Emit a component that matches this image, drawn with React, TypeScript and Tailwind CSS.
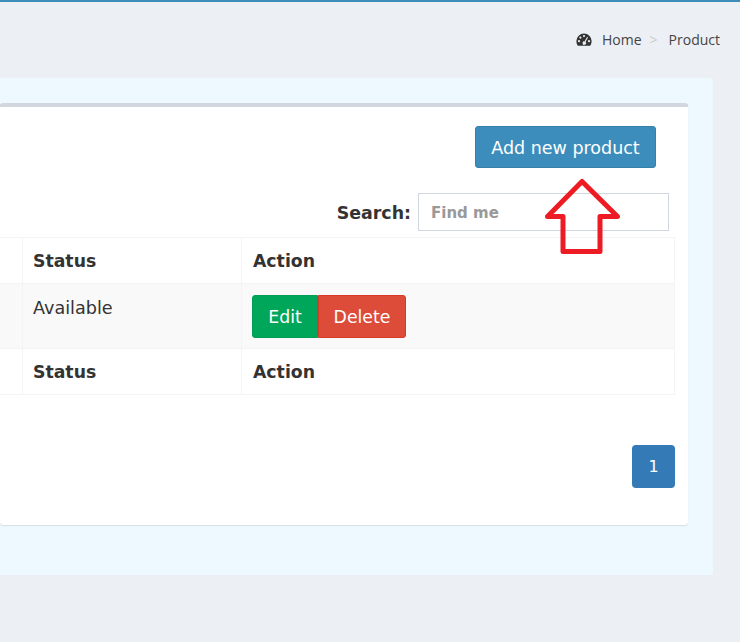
const App = () => {
  return (
    <div className="relative h-[642px] w-[740px] overflow-hidden bg-[#ecf0f5] font-['DejaVu_Sans',sans-serif] text-[#333]">
      <div className="h-[2px] bg-[#3c8dbc]" />

      <div className="flex h-[76px] items-start justify-end pr-[20px] pt-[28px] font-['Open_Sans',sans-serif] text-[14px] leading-[19px] text-[#444]">
        <svg width="16" height="14" viewBox="0 0 16 14" className="mr-[10px] mt-[3px] text-[#333]">
          <path fill="currentColor" d="M8 .5A7.6 7.6 0 0 0 .4 8c0 2 .6 3.6 1.4 4.8h12.4c.8-1.2 1.4-2.8 1.4-4.8A7.6 7.6 0 0 0 8 .5Z" />
          <g fill="#ecf0f5">
            <circle cx="8" cy="3" r="1.1" />
            <circle cx="4.4" cy="4.6" r="1.1" />
            <circle cx="3" cy="8.2" r="1.1" />
            <circle cx="13" cy="8.2" r="1.1" />
            <path d="M11.1 3.9l.9.5-2.5 4.5a1.7 1.7 0 1 1-1-.5Z" />
          </g>
        </svg>
        <span>Home</span>
        <span className="ml-[8px] mr-[11px] text-[#ccc]">&gt;</span>
        <span>Product</span>
      </div>

      <div className="h-[497px] w-[713px] rounded-r-[3px] bg-[#edf8ff] pt-[25px]">
        <div className="h-[422px] w-[688px] rounded-[3px] border-t-[4px] border-[#d2d6de] bg-white shadow-[0_1px_1px_rgba(0,0,0,0.1)]">
          <div className="flex justify-end pr-[32px] pt-[19px]">
            <button className="h-[42px] w-[181px] rounded-[3px] border border-[#367fa9] bg-[#3c8dbc] pt-[2px] text-[17.5px] text-white">
              Add new product
            </button>
          </div>

          <div className="mt-[25px] flex items-center justify-end pr-[19px]">
            <label className="mr-[7px] pt-[2px] text-[17.4px] font-bold text-[#333]">Search:</label>
            <input
              placeholder="Find me"
              className="h-[38px] w-[251px] border border-[#d2d6de] bg-white px-[12px] pt-[2px] text-[15px] font-bold placeholder:text-[#999]"
            />
          </div>

          <table className="-ml-[10px] mt-[6px] w-[685px] table-fixed border-collapse text-[17.3px]">
            <colgroup>
              <col className="w-[32px]" />
              <col className="w-[219px]" />
              <col />
            </colgroup>
            <thead>
              <tr className="h-[46px]">
                <th className="border border-[#f4f4f4]" />
                <th className="border border-[#f4f4f4] px-[10px] pt-[2px] text-left">Status</th>
                <th className="border border-[#f4f4f4] px-[11px] pt-[2px] text-left">Action</th>
              </tr>
            </thead>
            <tbody>
              <tr className="h-[65px] bg-[#f9f9f9]">
                <td className="border border-[#f4f4f4]" />
                <td className="border border-[#f4f4f4] px-[10px] pb-[16px] align-middle text-[17.6px]">Available</td>
                <td className="border border-[#f4f4f4] px-[10px] align-middle">
                  <div className="flex">
                    <button className="h-[43px] w-[66px] rounded-l-[3px] border border-[#009d55] bg-[#00a65a] pt-[3px] text-[17.3px] text-white">
                      Edit
                    </button>
                    <button className="h-[43px] w-[88px] rounded-r-[3px] border border-[#d73925] bg-[#dd4b39] pt-[3px] text-[17.3px] text-white">
                      Delete
                    </button>
                  </div>
                </td>
              </tr>
            </tbody>
            <tfoot>
              <tr className="h-[46px]">
                <th className="border border-[#f4f4f4]" />
                <th className="border border-[#f4f4f4] px-[10px] pt-[2px] text-left">Status</th>
                <th className="border border-[#f4f4f4] px-[11px] pt-[2px] text-left">Action</th>
              </tr>
            </tfoot>
          </table>

          <div className="mt-[50px] flex w-[675px] justify-end">
            <button className="h-[43px] w-[43px] rounded-[4px] bg-[#337ab7] text-[16px] font-medium text-white">1</button>
          </div>
        </div>
      </div>

      {/* red annotation arrow over the form */}
      <svg width="80" height="78" viewBox="0 0 80 78" className="absolute left-[543px] top-[178px]">
        <path
          d="M39 3.5 L74.5 38.5 L57 38.5 L57 73.5 L20 73.5 L20 38.5 L4.5 38.5 Z"
          fill="none"
          stroke="#ed1c24"
          strokeWidth="5"
          strokeLinejoin="round"
        />
      </svg>
    </div>
  );
};

export default App;
